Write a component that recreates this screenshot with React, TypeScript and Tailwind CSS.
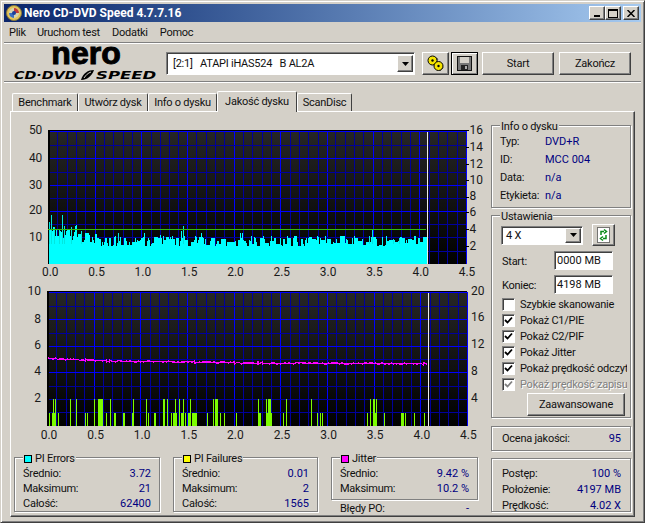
import React from 'react';

const raised =
  'border border-t-white border-l-white border-r-[#404040] border-b-[#404040] shadow-[inset_-1px_-1px_0_#808080] bg-[#d4d0c8]';
const sunken =
  'border border-t-[#808080] border-l-[#808080] border-r-white border-b-white shadow-[inset_1px_1px_0_#404040] bg-white';
const groove = 'border border-[#808080] shadow-[inset_1px_1px_0_#fff,1px_1px_0_#fff]';

// small seeded random so the graph looks the same on every load
const makeRandom = (seed: number) => () => {
  seed = (seed * 16807) % 2147483647;
  return seed / 2147483647;
};

const Separator = () => <div className="h-[2px] shrink-0 border-t border-t-[#808080] border-b border-b-white" />;

const Arrow = () => (
  <svg width="7" height="4" viewBox="0 0 7 4">
    <path d="M0 0h7L3.5 4z" fill="#000" />
  </svg>
);

const Group: React.FC<{ title?: string; swatch?: string; className?: string; children: React.ReactNode }> = ({
  title,
  swatch,
  className,
  children,
}) => (
  <div className={`relative ${groove} ${className ?? ''}`}>
    {title && (
      <div className="absolute -top-[7px] left-[8px] flex h-[15px] items-center gap-[3px] bg-[#d4d0c8] px-[1px]">
        {swatch && <span className={`h-[8px] w-[8px] border border-black ${swatch}`} />}
        <span>{title}</span>
      </div>
    )}
    {children}
  </div>
);

const Stat: React.FC<{ label: string; value: string }> = ({ label, value }) => (
  <div className="flex h-[15px] items-center justify-between">
    <span>{label}</span>
    <span className="tracking-normal text-[#000080]">{value}</span>
  </div>
);

const Check: React.FC<{ label: string; checked?: boolean; disabled?: boolean }> = ({ label, checked, disabled }) => (
  <div className="flex h-[16px] w-[125px] items-center gap-[5px] overflow-hidden whitespace-nowrap">
    <span
      className={`flex h-[13px] w-[13px] shrink-0 items-center justify-center ${sunken} ${disabled ? 'bg-[#d4d0c8]' : ''}`}
    >
      {checked && (
        <svg width="9" height="9" viewBox="0 0 9 9">
          <path d="M1 4l2.5 2.5L8 1.5" fill="none" stroke={disabled ? '#808080' : '#000'} strokeWidth="1.8" />
        </svg>
      )}
    </span>
    <span className={disabled ? 'text-[#808080] [text-shadow:1px_1px_0_#fff]' : ''}>{label}</span>
  </div>
);

interface ChartProps {
  originY: number;
  top: number;
  bottom: number;
  gridId: string;
  major: number[];
  minor: number[];
  left: [string, number][];
  right: [string, number][];
  ticks?: boolean;
  labelY: number;
  children: React.ReactNode;
}

const Chart: React.FC<ChartProps> = ({ originY, top, bottom, gridId, major, minor, left, right, ticks, labelY, children }) => {
  const verticals = Array.from({ length: 45 }, (_, i) => i + 1);
  return (
    <svg
      width="480"
      height="160"
      viewBox={`11 ${originY} 480 160`}
      className="block tracking-normal"
      fontSize="12"
      fill="#1a1a1a"
    >
      <defs>
        <linearGradient id={gridId} x1="0" y1="0" x2="0" y2="1">
          <stop offset="0" stopColor="#262626" />
          <stop offset="1" stopColor="#000" />
        </linearGradient>
      </defs>
      <g shapeRendering="crispEdges">
        <rect x="47" y={top} width="420" height={bottom - top} fill={`url(#${gridId})`} />
        {verticals.map((i) => (
          <rect
            key={i}
            x={Math.round(47 + i * 9.33)}
            y={top}
            width="1"
            height={bottom - top}
            fill={i % 5 === 0 ? '#0000ff' : '#00009c'}
          />
        ))}
        {minor.map((y) => (
          <rect key={y} x="47" y={y} width="420" height="1" fill="#00009c" />
        ))}
        {major.map((y) => (
          <rect key={y} x="47" y={y} width="420" height="1" fill="#0000ff" />
        ))}
        <rect x="47" y={top - 1} width="420" height="1" fill="#000" />
        <rect x="47" y={top} width="2" height={bottom - top} fill="#000" />
        {children}
        <rect x="428" y={top + 1} width="1" height={bottom - top - 1} fill="#ececec" />
        {ticks &&
          right.map(([t, y]) => <rect key={t} x="467" y={y} width="3" height="1" fill="#000" />)}
      </g>
      {left.map(([t, y]) => (
        <text key={t} x="41" y={y + 4} textAnchor="end">
          {t}
        </text>
      ))}
      {right.map(([t, y]) => (
        <text key={t} x="471" y={y + 4}>
          {t}
        </text>
      ))}
      {['0.0', '0.5', '1.0', '1.5', '2.0', '2.5', '3.0', '3.5', '4.0', '4.5'].map((t, i) => (
        <text key={t} x={49 + i * 46.6} y={labelY} textAnchor="middle">
          {t}
        </text>
      ))}
    </svg>
  );
};

const errorBars = () => {
  const rnd = makeRandom(4711);
  const spikes: Record<number, number> = {
    48: 42, 50: 49, 53: 37, 58: 35, 61: 49, 63: 38, 70: 37, 80: 33, 117: 31, 183: 38, 373: 35, 370: 28, 400: 26, 394: 25,
  };
  const heights: number[] = [];
  let current = 30;
  for (let x = 48; x <= 428; x++) {
    const base = 23 + (x < 105 ? ((105 - x) / 57) * 9 : 0);
    if (rnd() > 0.4) current = base + (rnd() - 0.5) * 11;
    let h = Math.round(current);
    if (rnd() > 0.94) h += 3 + Math.round(rnd() * 4);
    heights.push(h);
  }
  return (
    <>
      {heights.map((h, i) => (
        <rect key={i} x={48 + i} y={265 - h} width="1" height={h} fill="#00ffff" />
      ))}
      {Object.entries(spikes).map(([x, h]) => (
        <rect key={x} x={x} y={265 - h} width="1" height={h - 20} fill="#00e8e0" />
      ))}
      <rect x="47" y="230" width="380" height="1" fill="#33bb11" />
    </>
  );
};

// [x, width, units high]
const failures: [number, number, number][] = [
  [49, 1, 1], [52, 4, 1], [53, 1, 2], [55, 1, 2], [58, 1, 1], [70, 1, 2], [76, 1, 2], [85, 1, 1], [87, 1, 1], [94, 1, 2],
  [98, 5, 2], [106, 1, 1], [110, 1, 2], [114, 2, 1], [123, 2, 1], [132, 2, 1], [133, 1, 2], [146, 1, 2], [148, 1, 1],
  [154, 2, 1], [163, 2, 2], [167, 1, 2], [171, 1, 1], [173, 4, 1], [175, 1, 2], [179, 1, 2], [181, 3, 1], [183, 1, 2],
  [185, 1, 1], [188, 2, 1], [190, 1, 2], [192, 4, 1], [196, 1, 1], [207, 1, 1], [213, 1, 2], [215, 3, 2], [220, 1, 1],
  [224, 1, 1], [236, 1, 1], [258, 3, 1], [258, 1, 2], [266, 6, 1], [266, 1, 2], [268, 3, 2], [283, 1, 1], [286, 1, 2],
  [311, 1, 2], [317, 1, 1], [320, 1, 1], [322, 1, 1], [367, 1, 1], [370, 1, 2], [373, 4, 1], [373, 2, 2], [376, 1, 2],
  [384, 1, 1], [401, 3, 1], [405, 1, 1], [414, 1, 1], [424, 1, 1],
];

const jitterLine = () => {
  const rnd = makeRandom(99);
  const pts: string[] = [];
  for (let x = 48; x <= 427; x++) {
    const y = x < 110 ? 359.5 + ((x - 48) / 62) * 2.5 : x < 240 ? 362 + ((x - 110) / 130) * 1.8 : 364 + ((x - 240) / 187) * 0.8;
    pts.push(`${x},${Math.round(y + (rnd() - 0.5) * 1.6)}`);
  }
  return <polyline points={pts.join(' ')} fill="none" stroke="#ff00ff" strokeWidth="1.4" />;
};

const AppIcon = () => (
  <svg width="16" height="16" viewBox="0 0 16 16">
    <circle cx="8" cy="8" r="7.5" fill="#e2c45a" stroke="#8a7a3a" />
    <circle cx="8" cy="8" r="5" fill="#d8d4b0" />
    <path d="M8 3a5 5 0 0 1 5 5H8z" fill="#c23a3a" />
    <path d="M8 13a5 5 0 0 1-5-5h5z" fill="#3a6ec2" />
    <circle cx="8" cy="8" r="2" fill="#1d3f9a" />
  </svg>
);

const DiscsIcon = () => (
  <svg width="17" height="17" viewBox="0 0 17 17">
    <path d="M8 2l3 2-2 3M15 10l1 3-3 3" stroke="#666" fill="none" />
    <circle cx="5.5" cy="5.5" r="4.5" fill="#f5e400" stroke="#000" />
    <circle cx="11.5" cy="11" r="4.5" fill="#f5e400" stroke="#000" />
    <circle cx="5.5" cy="5.5" r="1.2" fill="#000" />
    <circle cx="11.5" cy="11" r="1.2" fill="#000" />
  </svg>
);

const SaveIcon = () => (
  <svg width="15" height="15" viewBox="0 0 15 15" shapeRendering="crispEdges">
    <rect x="0.5" y="0.5" width="14" height="14" fill="#777" stroke="#111" />
    <rect x="3" y="1" width="9" height="6" fill="#d4d0c8" />
    <rect x="4" y="9" width="7" height="5" fill="#222" />
    <rect x="8" y="10" width="2" height="3" fill="#aaa" />
  </svg>
);

const RefreshIcon = () => (
  <svg width="13" height="16" viewBox="0 0 13 16">
    <rect x="0.5" y="0.5" width="12" height="15" fill="#fff" stroke="#000" strokeDasharray="1 1" />
    <path d="M4 8V4.5h3M7 2.5l2.5 2-2.5 2" fill="none" stroke="#0a8a1a" strokeWidth="1.5" />
    <path d="M9 8v3.5H6M6 13.5l-2.5-2 2.5-2" fill="none" stroke="#0a8a1a" strokeWidth="1.5" />
  </svg>
);

const Logo = () => (
  <div className="-mt-[7px] flex h-[44px] w-[162px] shrink-0 flex-col pr-[8px] pl-[10px] font-['Liberation_Sans',sans-serif] tracking-normal text-black">
    <div className="h-[32px] text-center text-[32px] leading-[32px] font-bold [-webkit-text-stroke:1px_#000]">nero</div>
    <div className="flex h-[12px] items-center font-['DejaVu_Sans',sans-serif] text-[11px] leading-none font-bold italic">
      <span className="w-[65px] origin-left scale-x-[1.3] whitespace-nowrap">CD·DVD</span>
      <svg width="17" height="12" viewBox="0 0 17 12" className="shrink-0">
        <path d="M2 11C4 4 9 1 15 1 13 7 8 11 2 11z" fill="#000" />
        <path d="M5 9C7 6 9 4 12 3" stroke="#d4d0c8" fill="none" />
      </svg>
      <span className="w-[62px] origin-left scale-x-[1.5] whitespace-nowrap">SPEED</span>
    </div>
  </div>
);

const tabs = ['Benchmark', 'Utwórz dysk', 'Info o dysku', 'Jakość dysku', 'ScanDisc'];
const tabWidths = ['w-[66px]', 'w-[70px]', 'w-[69px]', 'w-[80px]', 'w-[55px]'];

export default function App() {
  return (
    <div className="flex h-[523px] w-[645px] flex-col overflow-hidden border border-t-[#d4d0c8] border-l-[#d4d0c8] border-r-[#404040] border-b-[#404040] bg-[#d4d0c8] p-[3px] font-['Roboto',sans-serif] text-[11px] leading-none tracking-[-0.25px] text-[#111] shadow-[inset_1px_1px_0_#fff,inset_-1px_-1px_0_#808080]">
      <div className="flex h-[18px] shrink-0 items-center bg-gradient-to-r from-[#0a246a] to-[#a6caf0] pr-[2px] pl-[2px]">
        <AppIcon />
        <span className="ml-[2px] text-[12px] font-bold tracking-normal text-white">Nero CD-DVD Speed 4.7.7.16</span>
        <div className="ml-auto flex items-center">
          <button className={`flex h-[14px] w-[16px] items-end justify-center pb-[2px] ${raised}`}>
            <span className="h-[2px] w-[6px] bg-black" />
          </button>
          <button className={`flex h-[14px] w-[16px] items-center justify-center ${raised}`}>
            <span className="h-[9px] w-[10px] border border-t-2 border-black" />
          </button>
          <button className={`ml-[2px] flex h-[14px] w-[16px] items-center justify-center ${raised}`}>
            <svg width="8" height="7" viewBox="0 0 8 7">
              <path d="M0.5 0l7 7M7.5 0l-7 7" stroke="#000" strokeWidth="1.5" />
            </svg>
          </button>
        </div>
      </div>

      <div className="flex h-[20px] shrink-0 items-center pl-[5px]">
        <span className="mr-[11px]">Plik</span>
        <span className="mr-[12px]">Uruchom test</span>
        <span className="mr-[12px]">Dodatki</span>
        <span>Pomoc</span>
      </div>
      <Separator />

      <div className="flex h-[37px] shrink-0 items-start">
        <Logo />
        <div className="mt-[8px] flex h-[23px] w-[249px] items-center justify-between border border-t-[#808080] border-l-[#808080] border-r-white border-b-white bg-white pr-[1px] pl-[6px] shadow-[inset_1px_1px_0_#404040]">
          <span className="whitespace-pre">[2:1]   ATAPI iHAS524   B AL2A</span>
          <span className={`flex h-[17px] w-[16px] items-center justify-center ${raised}`}>
            <Arrow />
          </span>
        </div>
        <button className={`mt-[8px] ml-[7px] flex h-[23px] w-[27px] items-center justify-center ${raised}`}>
          <DiscsIcon />
        </button>
        <button className="mt-[8px] ml-[2px] flex h-[23px] w-[27px] items-center justify-center border border-black bg-[#d4d0c8] shadow-[inset_1px_1px_0_#fff,inset_-1px_-1px_0_#808080]">
          <SaveIcon />
        </button>
        <button className={`mt-[8px] ml-[4px] h-[23px] w-[72px] ${raised}`}>Start</button>
        <button className={`mt-[8px] ml-[5px] h-[23px] w-[72px] ${raised}`}>Zakończ</button>
      </div>
      <Separator />

      <div className="mt-[8px] ml-[8px] flex h-[20px] shrink-0 items-end">
        {tabs.map((tab, i) =>
          i === 3 ? (
            <div
              key={tab}
              className={`relative z-10 -mb-px flex h-[21px] ${tabWidths[i]} items-center justify-center rounded-t-[2px] border border-b-0 border-t-white border-l-white border-r-[#404040] bg-[#d4d0c8] pb-[2px]`}
            >
              {tab}
            </div>
          ) : (
            <div
              key={tab}
              className={`flex h-[18px] ${tabWidths[i]} items-center justify-center rounded-t-[2px] border border-b-0 border-t-white border-l-white border-r-[#404040] bg-[#d4d0c8]`}
            >
              {tab}
            </div>
          ),
        )}
      </div>

      <div className="ml-[6px] flex h-[406px] w-[625px] shrink-0 border border-t-white border-l-white border-r-[#404040] border-b-[#404040] shadow-[inset_-1px_-1px_0_#808080]">
        <div className="flex w-[480px] shrink-0 flex-col pt-[10px]">
          <Chart
            originY={122}
            top={131}
            bottom={265}
            gridId="grid-top"
            major={[131, 158, 185, 212]}
            minor={[145, 172, 198, 225, 238, 252]}
            left={[['50', 130], ['40', 158], ['30', 185], ['20', 211], ['10', 238]]}
            right={[['16', 130], ['14', 147], ['12', 164], ['10', 180], ['8', 197], ['6', 213], ['4', 230], ['2', 247]]}
            ticks
            labelY={277}
          >
            {errorBars()}
          </Chart>
          <div className="mt-[2px]">
            <Chart
              originY={284}
              top={293}
              bottom={427}
              gridId="grid-bottom"
              major={[293, 320, 347, 373]}
              minor={[307, 334, 360, 387, 400, 413]}
              left={[['10', 292], ['8', 320], ['6', 346], ['4', 372], ['2', 399]]}
              right={[['20', 292], ['16', 318], ['12', 345], ['8', 372], ['4', 399]]}
              labelY={440}
            >
              {failures.map(([x, w, h], i) => (
                <rect key={i} x={x} y={427 - h * 13.5} width={w} height={h * 13.5} fill="#7cfc00" />
              ))}
              {jitterLine()}
            </Chart>
          </div>
          <div className="mt-[14px] ml-[3px] flex items-start gap-[13px]">
            <Group title="PI Errors" swatch="bg-[#00ffff]" className="h-[55px] w-[146px] px-[8px] pt-[8px]">
              <Stat label="Średnio:" value="3.72" />
              <Stat label="Maksimum:" value="21" />
              <Stat label="Całość:" value="62400" />
            </Group>
            <Group title="PI Failures" swatch="bg-[#ffff00]" className="h-[55px] w-[145px] px-[8px] pt-[8px]">
              <Stat label="Średnio:" value="0.01" />
              <Stat label="Maksimum:" value="2" />
              <Stat label="Całość:" value="1565" />
            </Group>
            <div className="w-[147px]">
              <Group title="Jitter" swatch="bg-[#ff00ff]" className="h-[43px] px-[8px] pt-[8px]">
                <Stat label="Średnio:" value="9.42 %" />
                <Stat label="Maksimum:" value="10.2 %" />
              </Group>
              <div className="mt-[1px] px-[9px]">
                <Stat label="Błędy PO:" value="-" />
              </div>
            </div>
          </div>
        </div>

        <div className="flex w-[140px] shrink-0 flex-col pt-[13px]">
          <Group title="Info o dysku" className="h-[83px] px-[8px] pt-[6px]">
            {[
              ['Typ:', 'DVD+R'],
              ['ID:', 'MCC 004'],
              ['Data:', 'n/a'],
              ['Etykieta:', 'n/a'],
            ].map(([label, value]) => (
              <div key={label} className="flex h-[18px] items-center">
                <span className="w-[45px]">{label}</span>
                <span className="tracking-normal text-[#000080]">{value}</span>
              </div>
            ))}
          </Group>

          <Group title="Ustawienia" className="mt-[7px] h-[203px] pl-[10px]">
            <div className="mt-[8px] ml-[-1px] flex items-center">
              <div className={`flex h-[19px] w-[82px] items-center justify-between pr-[1px] pl-[4px] ${sunken}`}>
                <span>4 X</span>
                <span className={`flex h-[15px] w-[16px] items-center justify-center ${raised}`}>
                  <Arrow />
                </span>
              </div>
              <button className={`ml-[9px] flex h-[22px] w-[23px] items-center justify-center ${raised}`}>
                <RefreshIcon />
              </button>
            </div>
            {[
              ['Start:', '0000 MB'],
              ['Koniec:', '4198 MB'],
            ].map(([label, value]) => (
              <div key={label} className="mt-[5px] flex items-center">
                <span className="w-[52px] pt-[2px]">{label}</span>
                <div className={`flex h-[19px] w-[59px] items-center pl-[2px] tracking-normal ${sunken}`}>{value}</div>
              </div>
            ))}
            <div className="mt-[2px]">
              <Check label="Szybkie skanowanie" />
              <Check label="Pokaż C1/PIE" checked />
              <Check label="Pokaż C2/PIF" checked />
              <Check label="Pokaż Jitter" checked />
              <Check label="Pokaż prędkość odczytu" checked />
              <Check label="Pokaż prędkość zapisu" checked disabled />
            </div>
            <button className={`mt-[1px] ml-[25px] h-[23px] w-[98px] ${raised}`}>Zaawansowane</button>
          </Group>

          <Group className="mt-[8px] flex h-[25px] items-center justify-between pr-[9px] pl-[10px]">
            <span>Ocena jakości:</span>
            <span className="tracking-normal text-[#000080]">95</span>
          </Group>

          <Group className="mt-[7px] h-[54px] pt-[6px] pr-[9px] pl-[10px]">
            <div className="flex h-[16px] items-center justify-between">
              <span>Postęp:</span>
              <span className="tracking-normal text-[#000080]">100 %</span>
            </div>
            <div className="flex h-[16px] items-center justify-between">
              <span>Położenie:</span>
              <span className="tracking-normal text-[#000080]">4197 MB</span>
            </div>
            <div className="flex h-[16px] items-center justify-between">
              <span>Prędkość:</span>
              <span className="tracking-normal text-[#000080]">4.02 X</span>
            </div>
          </Group>
        </div>
      </div>
    </div>
  );
}
